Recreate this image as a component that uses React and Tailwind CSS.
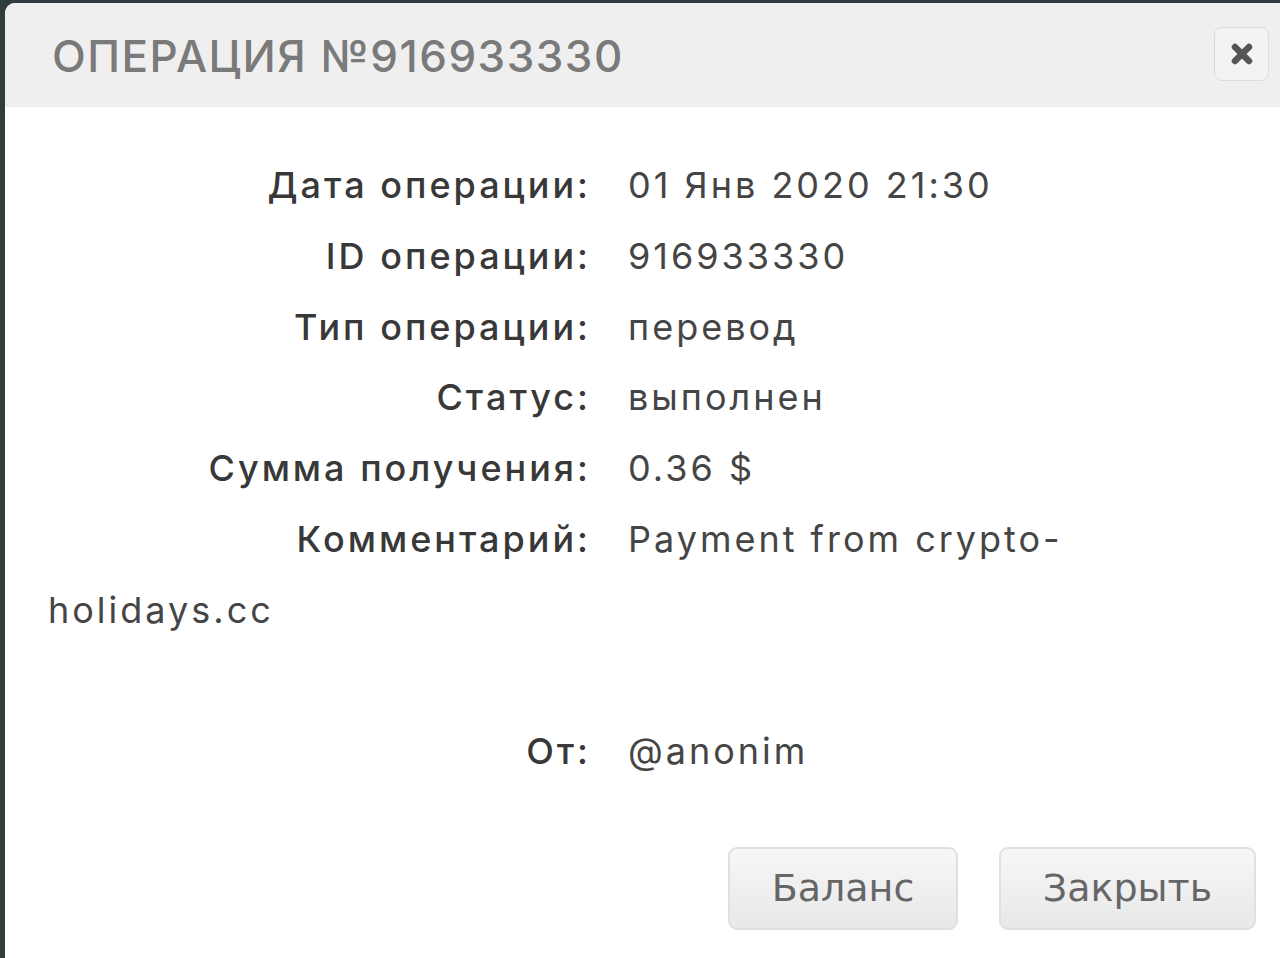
import React from "react";

const rows = [
  ["Дата операции:", "01 Янв 2020 21:30"],
  ["ID операции:", "916933330"],
  ["Тип операции:", "перевод"],
  ["Статус:", "выполнен"],
  ["Сумма получения:", "0.36 $"],
];

function Label({ children }) {
  return (
    <span className="inline-block w-[543px] text-right mr-[37px] text-[#383838] font-medium">
      {children}
    </span>
  );
}

export default function App() {
  return (
    <div className="w-[1280px] h-[958px] bg-[#2f3d3f] pl-[5px] pt-[3px] overflow-hidden">
      <div className="h-full bg-white rounded-tl-[10px] overflow-hidden flex flex-col">
        <div className="h-[104px] bg-[#efefef] flex items-center justify-between pl-[47px] pr-[11px]">
          <div
            className="text-[#7a7a7a] text-[44px] font-medium tracking-[1.5px] leading-none pt-[1px]"
            style={{ fontFamily: 'Inter, sans-serif' }}
          >
            ОПЕРАЦИЯ №916933330
          </div>
          <div className="w-[55px] h-[54px] rounded-[8px] border border-[#dcdcdc] bg-[#f3f3f3] flex items-center justify-center mb-[3px]">
            <svg width="26" height="26" viewBox="0 0 26 26">
              <path d="M6 6 L20 20 M20 6 L6 20" stroke="#555555" strokeWidth="6.5" strokeLinecap="round" />
            </svg>
          </div>
        </div>
        <div
          className="pl-[43px] pr-[10px] pt-[43px] text-[36px] tracking-[3px] leading-[70.8px] text-[#454545]"
          style={{ fontFamily: 'Inter, "Open Sans", sans-serif' }}
        >
          {rows.map(([l, v]) => (
            <div key={l}>
              <Label>{l}</Label>
              <span>{v}</span>
            </div>
          ))}
          <div>
            <Label>Комментарий:</Label>
            <span>Payment from crypto-</span>
            <span>holidays.cc</span>
          </div>
          <div className="h-[70.8px]"></div>
          <div>
            <Label>От:</Label>
            <span>@anonim</span>
          </div>
        </div>
        <div className="flex justify-end gap-[41px] pr-[24px] mt-[60px]">
          <button
            className="w-[230px] h-[83px] rounded-[9px] border-2 border-[#e0e0e0] bg-gradient-to-b from-[#f7f7f7] to-[#e8e8e8] text-[#666666] text-[38px]"
            style={{ fontFamily: '"DejaVu Sans", sans-serif' }}
          >
            Баланс
          </button>
          <button
            className="w-[257px] h-[83px] rounded-[9px] border-2 border-[#e0e0e0] bg-gradient-to-b from-[#f7f7f7] to-[#e8e8e8] text-[#666666] text-[38px]"
            style={{ fontFamily: '"DejaVu Sans", sans-serif' }}
          >
            Закрыть
          </button>
        </div>
      </div>
    </div>
  );
}
